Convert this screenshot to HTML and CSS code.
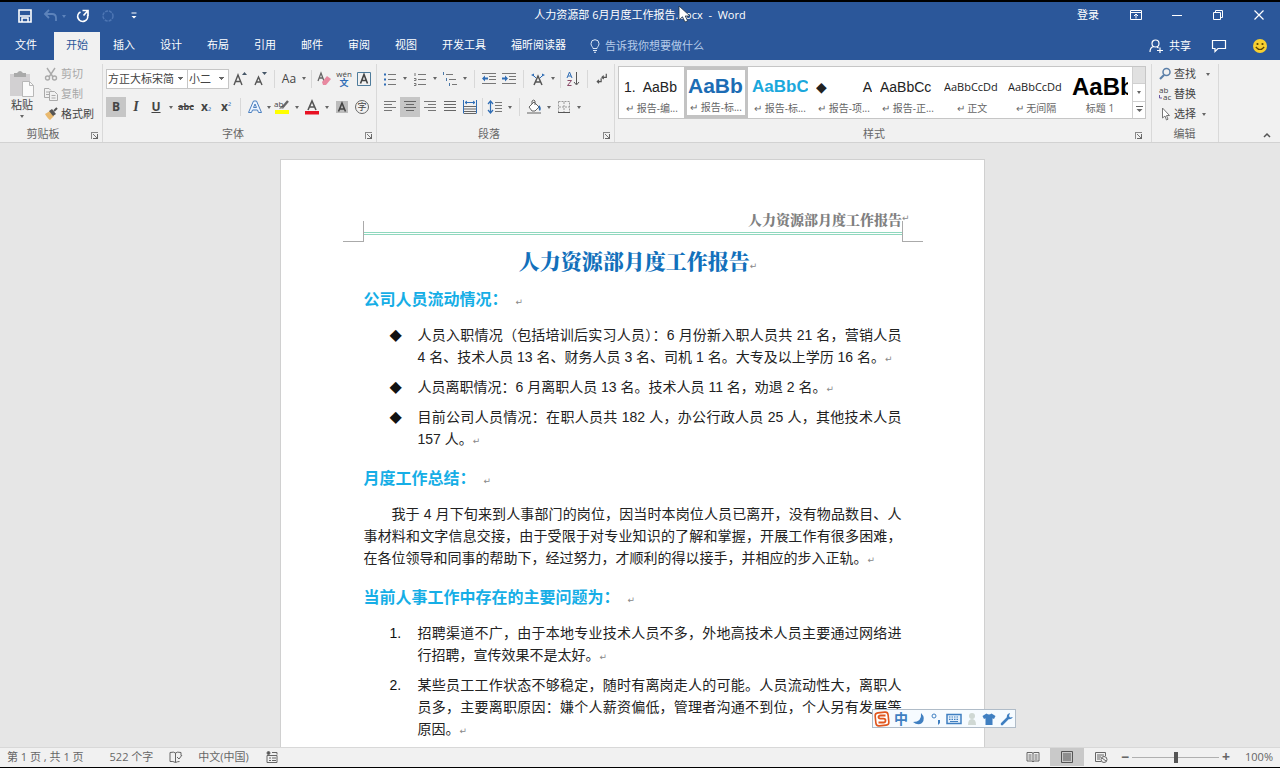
FILE: index.html
```html
<!DOCTYPE html>
<html lang="zh-CN">
<head>
<meta charset="utf-8">
<meta name="viewport" content="width=device-width, initial-scale=1">
<title>人力资源部 6月月度工作报告.docx - Word</title>
<link rel="stylesheet" href="styles.css">
</head>
<body>
<header class="titlebar">
  <div class="quick">
    <button aria-label="保存"><svg width="14" height="14" viewBox="0 0 14 14"><path d="M1 1h12v12H1z" fill="none" stroke="#fff" stroke-width="1.6"/><path d="M2 7h10M4 13v-4h6v4" fill="none" stroke="#fff" stroke-width="1.5"/></svg></button>
    <button class="faded" aria-label="撤消"><svg width="16" height="14" viewBox="0 0 16 14"><path d="M2 5h7q4 0 4 4v3M6 1L2 5l4 4" fill="none" stroke="#8fb0dd" stroke-width="1.8"/></svg><i class="caret"></i></button>
    <button aria-label="重复"><svg width="14" height="14" viewBox="0 0 14 14"><path d="M4.500 3A5 5 0 1 0 11.500 6M6.500 1.500H12V7M12 1.500L7.500 6.500" fill="none" stroke="#fff" stroke-width="1.700"/></svg></button>
    <button class="faded" aria-label="停止"><svg width="14" height="14" viewBox="0 0 14 14"><circle cx="7" cy="7" r="5" fill="none" stroke="#6f94cd" stroke-width="1.500" stroke-dasharray="3 1"/></svg></button>
    <button aria-label="自定义快速访问工具栏"><svg width="8" height="8" viewBox="0 0 8 8"><path d="M1.500 1h5" stroke="#fff"/><path d="M1.500 4h5L4 6.500z" fill="#fff"/></svg></button>
  </div>
  <div class="doc-name">人力资源部 6月月度工作报告.docx&nbsp; - &nbsp;Word</div>
  <div class="window-tools">
    <button class="login">登录</button>
    <button aria-label="功能区显示选项"><svg width="12" height="12" viewBox="0 0 12 12" fill="none" stroke="#fff"><path d="M.5 1.500h11v9H.5zM.5 3.500h11M6 9.500v-4M4 7l2-2 2 2"/></svg></button>
    <button aria-label="最小化"><svg width="12" height="12" viewBox="0 0 12 12"><path d="M1 6.500h10" stroke="#fff"/></svg></button>
    <button aria-label="还原"><svg width="12" height="12" viewBox="0 0 12 12" fill="none" stroke="#fff"><path d="M1.500 3.500h7v7h-7zM3.500 3.500v-2h7v7h-2"/></svg></button>
    <button aria-label="关闭"><svg width="12" height="12" viewBox="0 0 12 12"><path d="M1.500 1.500l9 9M10.500 1.500l-9 9" stroke="#fff" stroke-width="1.200"/></svg></button>
  </div>
  <svg class="pointer" width="14" height="18" viewBox="0 0 14 18"><path d="M1 1v14l3.500-3.200L7 17l2.600-1.200L7.200 11H12z" fill="#fff" stroke="#234" stroke-width=".8"/></svg>
</header>
<nav class="tabs">
  <a class="tab file" href="#">文件</a>
  <a class="tab active" href="#">开始</a>
  <a class="tab" href="#">插入</a>
  <a class="tab" href="#">设计</a>
  <a class="tab" href="#">布局</a>
  <a class="tab" href="#">引用</a>
  <a class="tab" href="#">邮件</a>
  <a class="tab" href="#">审阅</a>
  <a class="tab" href="#">视图</a>
  <a class="tab" href="#">开发工具</a>
  <a class="tab" href="#">福昕阅读器</a>
  <button class="tell"><svg width="10" height="14" viewBox="0 0 10 14" fill="none" stroke="#dce8f8"><path d="M3 9.500C3 8 1 7 1 4.700a4 4 0 0 1 8 0C9 7 7 8 7 9.500zM3 11.500h4M4 13.300h2"/></svg>告诉我你想要做什么</button>
  <div class="tab-tools">
    <button><svg width="14" height="14" viewBox="0 0 14 14" fill="none" stroke="#fff" stroke-width="1.200"><circle cx="6.500" cy="4.500" r="3.500"/><path d="M1 13q0-5 4-5.500M8 8l1.500 1M8 11.500h6M11 8.500v5.500"/></svg>共享</button>
    <button aria-label="批注"><svg width="16" height="14" viewBox="0 0 16 14" fill="none" stroke="#fff" stroke-width="1.200"><path d="M1.500 1.500h13v8H7l-3 3v-3H1.500z"/></svg></button>
    <button aria-label="反馈"><svg width="16" height="16" viewBox="0 0 16 16"><circle cx="8" cy="8" r="7" fill="#f8cf2f"/><circle cx="5.500" cy="6" r="1.100" fill="#5b4300"/><circle cx="10.500" cy="6" r="1.100" fill="#5b4300"/><path d="M3.800 9q4.200 5 8.400 0" fill="none" stroke="#5b4300" stroke-width="1.200"/></svg></button>
  </div>
</nav>

<section class="ribbon" aria-label="开始">
  <div class="group clipboard">
    <div class="clip-body">
      <button class="paste"><svg width="26" height="28" viewBox="0 0 26 28"><path d="M1 4h20v22H1z" fill="#d2d0d2"/><path d="M5 3h3q3-4 6 0h3v4H5z" fill="#aaa"/><path d="M13.500 11.500h7l4 4v11h-11z" fill="#fafafa" stroke="#b8b8b8"/><path d="M20.500 11.500v4h4" fill="none" stroke="#b8b8b8"/></svg>粘贴<i class="caret"></i></button>
      <div class="stack">
        <button class="dim"><svg width="14" height="14" viewBox="0 0 14 14" fill="none" stroke="#aaa" stroke-width="1.400"><path d="M3 1l6 9M11 1L5 10"/><circle cx="3.500" cy="11" r="2"/><circle cx="10.500" cy="11" r="2"/></svg>剪切</button>
        <button class="dim"><svg width="14" height="14" viewBox="0 0 14 14" fill="none" stroke="#aaa"><path d="M5 10.500H.5v-9H5l2 2M2 5h3M2 7.500h3M5.500 4.500h5l3 3v6h-8zM7.500 8.500h4M7.500 11h4"/></svg>复制</button>
        <button><svg width="14" height="14" viewBox="0 0 14 14"><path d="M1 7l5-3 4 5-4 4q-2-1-5-6z" fill="#e9b96e"/><path d="M5 4l3-2 4 5-3 2z" fill="#555"/><path d="M10 4l3-3" stroke="#555" stroke-width="2"/></svg>格式刷</button>
      </div>
    </div>
    <div class="caption">剪贴板<button class="launch" aria-label="剪贴板设置"></button></div>
  </div>

  <div class="group font">
    <div class="row">
      <select class="face" aria-label="字体"><option>方正大标宋简</option></select>
      <select class="size" aria-label="字号"><option>小二</option></select>
      <button class="tool" aria-label="增大字号"><svg width="16" height="16" viewBox="0 0 16 16"><path d="M2 14L6 4l4 10M3.500 10.500h5" fill="none" stroke="#555" stroke-width="1.400"/><path d="M10 4h5l-2.500-3z" fill="#456"/></svg></button>
      <button class="tool" aria-label="减小字号"><svg width="16" height="16" viewBox="0 0 16 16"><path d="M3 14l3.500-8L10 14M4.500 11h4" fill="none" stroke="#555" stroke-width="1.400"/><path d="M10 1h5l-2.500 3z" fill="#456"/></svg></button>
      <span class="sep"></span>
      <button class="tool case">Aa</button><i class="caret"></i>
      <span class="sep narrow"></span>
      <button class="tool" aria-label="清除格式"><svg width="16" height="16" viewBox="0 0 16 16"><path d="M2 10l3-8 3 8M3 7h4" fill="none" stroke="#666" stroke-width="1.300"/><path d="M6 11l5-6 4 3-5 6H7z" fill="#e889a0"/></svg></button>
      <button class="tool pinyin" aria-label="拼音指南"><span>wén</span><b>文</b></button>
      <button class="tool" aria-label="字符边框"><svg width="16" height="16" viewBox="0 0 16 16" fill="none"><path d="M1.500 1.500h13v13h-13z" stroke="#4f7c9c"/><path d="M4.500 12.500l3.500-9 3.500 9M6 9.500h4" stroke="#444" stroke-width="1.600"/></svg></button>
    </div>
    <div class="row">
      <button class="tool pressed"><b>B</b></button>
      <button class="tool serif"><em>I</em></button>
      <button class="tool"><u><b>U</b></u></button><i class="caret"></i>
      <button class="tool abc"><s>abc</s></button>
      <button class="tool sub"><b>x</b><small>₂</small></button>
      <button class="tool sub"><b>x</b><small>²</small></button>
      <span class="sep"></span>
      <button class="tool" aria-label="文本效果"><svg width="16" height="16" viewBox="0 0 16 16"><path d="M1.500 13.500L6.500 2h3l5 11.500h-3L10.500 11h-5l-1 2.500zM6.500 8.500h3L8 5z" fill="#eef5ff" stroke="#4b80c0"/></svg></button><i class="caret tight"></i>
      <button class="tool" aria-label="突出显示"><svg width="16" height="16" viewBox="0 0 16 16"><path d="M1 11h14v4H1z" fill="#ff0"/><path d="M8 9l6-7" stroke="#666" stroke-width="2.400"/><path d="M5 10l2-3 3 2z" fill="#888"/><text x="0" y="8" font-size="8" fill="#444">ab</text></svg></button><i class="caret"></i>
      <button class="tool" aria-label="字体颜色"><svg width="16" height="16" viewBox="0 0 16 16"><path d="M1 12h14v3.500H1z" fill="#e81123"/><path d="M4 11l4-9 4 9M5.500 8h5" fill="none" stroke="#555" stroke-width="1.600"/></svg></button><i class="caret"></i>
      <button class="tool" aria-label="字符底纹"><svg width="14" height="14" viewBox="0 0 14 14"><path d="M1 1h12v12H1z" fill="#bcbcbc"/><path d="M3.500 11.500L7 3l3.500 8.500M5 9h4" fill="none" stroke="#444" stroke-width="1.600"/></svg></button>
      <button class="tool"><span class="ring">字</span></button>
    </div>
    <div class="caption">字体<button class="launch" aria-label="字体设置"></button></div>
  </div>

  <div class="group para">
    <div class="row">
      <button class="tool" aria-label="项目符号"><svg width="14" height="14" viewBox="0 0 14 14"><path d="M5 2.500h8M5 7.500h8M5 12.500h8" stroke="#777"/><path d="M1 1.500h2v2H1zM1 6.500h2v2H1zM1 11.500h2v2H1z" fill="#2f6db5"/></svg></button><i class="caret"></i>
      <button class="tool" aria-label="编号"><svg width="14" height="14" viewBox="0 0 14 14"><path d="M5 2.500h8M5 7.500h8M5 12.500h8" stroke="#777"/><path d="M2 1v3M1 6.500h2v2H1M1 11.500h2v2H1" fill="none" stroke="#777"/></svg></button><i class="caret"></i>
      <button class="tool" aria-label="多级列表"><svg width="16" height="14" viewBox="0 0 16 14"><path d="M4 2.500h7M7 7.500h7M10 12.500h5" stroke="#777"/><path d="M1.500 0v3M4.500 6v3M7.500 11v3" stroke="#4a78a8"/></svg></button><i class="caret"></i>
      <span class="sep"></span>
      <button class="tool" aria-label="减少缩进"><svg width="16" height="14" viewBox="0 0 16 14"><path d="M1 1.500h14M8 4.500h7M8 7.500h7M1 11.500h14" stroke="#777"/><path d="M1 6.500l3-3v2h3v2H4v2z" fill="#2f6db5"/></svg></button>
      <button class="tool" aria-label="增加缩进"><svg width="16" height="14" viewBox="0 0 16 14"><path d="M1 1.500h14M8 4.500h7M8 7.500h7M1 11.500h14" stroke="#777"/><path d="M7 6.500l-3-3v2H1v2h3v2z" fill="#2f6db5"/></svg></button>
      <span class="sep"></span>
      <button class="tool" aria-label="中文版式"><svg width="16" height="16" viewBox="0 0 16 16" fill="none"><path d="M4 14l4-9 4 9M5.500 11h5" stroke="#555" stroke-width="1.500"/><path d="M1 4l3-1.500v3zM15 4l-3-1.500v3z" fill="#2f6db5"/><path d="M3 4l3 3M13 4l-3 3" stroke="#2f6db5"/></svg></button><i class="caret"></i>
      <span class="sep narrow"></span>
      <button class="tool" aria-label="排序"><svg width="14" height="16" viewBox="0 0 14 16" fill="none"><path d="M1 7l2.500-6L6 7M2 5h3" stroke="#2f6db5"/><path d="M1.500 9.500h4l-4 5h4" stroke="#8a4a68"/><path d="M10.500 1v12M8 11l2.500 3 2.500-3" stroke="#555"/></svg></button>
      <span class="sep"></span>
      <button class="tool" aria-label="显示编辑标记"><svg width="12" height="12" viewBox="0 0 14 14" fill="none" stroke="#555" stroke-width="1.400"><path d="M12 1v4H7M9 3L7 5l2 2M6 6v4H1M3.500 8l-2 2 2 2"/></svg></button>
    </div>
    <div class="row">
      <button class="tool" aria-label="左对齐"><svg width="14" height="14" viewBox="0 0 14 14"><path d="M1 1.500h12M1 4.500h8M1 7.500h12M1 10.500h8" stroke="#777"/></svg></button>
      <button class="tool pressed" aria-label="居中"><svg width="14" height="14" viewBox="0 0 14 14"><path d="M1 1.500h12M3 4.500h8M1 7.500h12M3 10.500h8" stroke="#666"/></svg></button>
      <button class="tool" aria-label="右对齐"><svg width="14" height="14" viewBox="0 0 14 14"><path d="M1 1.500h12M5 4.500h8M1 7.500h12M5 10.500h8" stroke="#777"/></svg></button>
      <button class="tool" aria-label="两端对齐"><svg width="14" height="14" viewBox="0 0 14 14"><path d="M1 1.500h12M1 4.500h12M1 7.500h12M1 10.500h12" stroke="#666"/></svg></button>
      <button class="tool" aria-label="分散对齐"><svg width="16" height="14" viewBox="0 0 16 14" fill="none"><path d="M1.500 0v13.500M14.500 0v13.500" stroke="#2f6db5"/><path d="M3 2.500h10M5 1L3 2.500 5 4M11 1l2 1.500L11 4" stroke="#2f6db5"/><path d="M2 6.500h12M2 9h12M2 11.500h12M2 13.500h12" stroke="#666"/></svg></button>
      <span class="sep narrow"></span>
      <button class="tool" aria-label="行距"><svg width="16" height="14" viewBox="0 0 16 14" fill="none"><path d="M3.500 1v12M1 4l2.500-3L6 4M1 10l2.500 3L6 10" stroke="#2f6db5" stroke-width="1.200"/><path d="M8 2.500h7M8 5.500h7M8 8.500h7M8 11.500h7" stroke="#777"/></svg></button><i class="caret"></i>
      <span class="sep"></span>
      <button class="tool" aria-label="底纹"><svg width="16" height="16" viewBox="0 0 16 16"><path d="M3 8l5-5 5 5-4 4H6z" fill="#fff" stroke="#666"/><path d="M6 5V2q2-2 3 0v4" fill="none" stroke="#666"/><path d="M13 6q3 3 1 6-2-1-1-6" fill="#2f6db5"/><path d="M1 14h14" stroke="#aaa" stroke-width="2"/></svg></button><i class="caret"></i>
      <button class="tool" aria-label="边框"><svg width="14" height="14" viewBox="0 0 14 14" fill="none"><path d="M1.500 1.500h11v11M1.500 1.500v11M7 2v10M2 7h10" stroke="#999" stroke-dasharray="2 1"/><path d="M1 12.500h12" stroke="#555"/></svg></button><i class="caret"></i>
    </div>
    <div class="caption">段落<button class="launch" aria-label="段落设置"></button></div>
  </div>

  <div class="group styles">
    <div class="gallery">
      <button class="style"><span class="sample s14">1.&nbsp; AaBb</span><span class="name">↵ 报告-编...</span></button>
      <button class="style chosen"><span class="sample s21">AaBb</span><span class="name">↵ 报告-标...</span></button>
      <button class="style"><span class="sample s18">AaBbC</span><span class="name">↵ 报告-标...</span></button>
      <button class="style"><span class="sample s14 split"><span>◆</span><span>A</span></span><span class="name">↵ 报告-项...</span></button>
      <button class="style"><span class="sample s14">AaBbCc</span><span class="name">↵ 报告-正...</span></button>
      <button class="style"><span class="sample s12">AaBbCcDd</span><span class="name">↵ 正文</span></button>
      <button class="style"><span class="sample s12">AaBbCcDd</span><span class="name">↵ 无间隔</span></button>
      <button class="style"><span class="sample s24">AaBb</span><span class="name">标题 1</span></button>
      <div class="scroller"><button aria-label="上一行" disabled></button><button aria-label="下一行"><i class="caret"></i></button><button aria-label="其他"><svg width="7" height="7" viewBox="0 0 7 7"><path d="M0 .5h7" stroke="#666"/><path d="M.5 3h6l-3 3z" fill="#666"/></svg></button></div>
    </div>
    <div class="caption">样式<button class="launch" aria-label="样式设置"></button></div>
  </div>

  <div class="group edit">
    <div class="stack">
      <button><svg width="12" height="14" viewBox="0 0 12 14" fill="none" stroke="#5b7fa8"><circle cx="7.500" cy="5" r="3.500" stroke-width="1.500"/><path d="M5 8l-4 4" stroke-width="2.200"/></svg>查找<i class="caret far"></i></button>
      <button><svg width="12" height="14" viewBox="0 0 12 14"><text x="0" y="6" font-size="8" fill="#444">ab</text><text x="4" y="13" font-size="8" fill="#444">ac</text><path d="M.5 8v3H3" fill="none" stroke="#6a55a0"/></svg>替换</button>
      <button><svg width="12" height="14" viewBox="0 0 12 14"><path d="M3.500 1v10L6 9l1.500 4L9 12.200 7.500 8.500h3z" fill="#fff" stroke="#777"/></svg>选择<i class="caret"></i></button>
    </div>
    <div class="caption">编辑</div>
  </div>
  <button class="collapse" aria-label="折叠功能区"><svg width="8" height="6" viewBox="0 0 8 6"><path d="M1 5l3-3 3 3" fill="none" stroke="#555" stroke-width="1.500"/></svg></button>
</section>

<main class="workspace">
  <article class="page">
    <div class="page-head"><span>人力资源部月度工作报告</span><i class="ret">↵</i></div>
    <div class="rule"></div>
    <h1>人力资源部月度工作报告<i class="ret">↵</i></h1>
    <h2>公司人员流动情况：<i class="ret">↵</i></h2>
    <ul>
      <li><span class="mark">◆</span><div><span class="line full">人员入职情况（包括培训后实习人员）：6 月份新入职人员共 21 名，营销人员</span><span class="line">4 名、技术人员 13 名、财务人员 3 名、司机 1 名。大专及以上学历 16 名。<i class="ret">↵</i></span></div></li>
      <li><span class="mark">◆</span><div><span class="line">人员离职情况：6 月离职人员 13 名。技术人员 11 名，劝退 2 名。<i class="ret">↵</i></span></div></li>
      <li><span class="mark">◆</span><div><span class="line full">目前公司人员情况：在职人员共 182 人，办公行政人员 25 人，其他技术人员</span><span class="line">157 人。<i class="ret">↵</i></span></div></li>
    </ul>
    <h2>月度工作总结：<i class="ret">↵</i></h2>
    <p><span class="line full indent">我于 4 月下旬来到人事部门的岗位，因当时本岗位人员已离开，没有物品数目、人</span><span class="line full">事材料和文字信息交接，由于受限于对专业知识的了解和掌握，开展工作有很多困难，</span><span class="line">在各位领导和同事的帮助下，经过努力，才顺利的得以接手，并相应的步入正轨。<i class="ret">↵</i></span></p>
    <h2>当前人事工作中存在的主要问题为：<i class="ret">↵</i></h2>
    <ol>
      <li><span class="mark">1.</span><div><span class="line full">招聘渠道不广，由于本地专业技术人员不多，外地高技术人员主要通过网络进</span><span class="line">行招聘，宣传效果不是太好。<i class="ret">↵</i></span></div></li>
      <li><span class="mark">2.</span><div><span class="line full">某些员工工作状态不够稳定，随时有离岗走人的可能。人员流动性大，离职人</span><span class="line full">员多，主要离职原因：嫌个人薪资偏低，管理者沟通不到位，个人另有发展等</span><span class="line">原因。<i class="ret">↵</i></span></div></li>
    </ol>
  </article>
</main>

<aside class="ime" aria-label="输入法">
  <svg width="16" height="16" viewBox="0 0 16 16"><rect x="1.500" y="1.500" width="13" height="13" rx="3" fill="#fff" stroke="#e0561f" stroke-width="1.600" transform="rotate(-6 8 8)"/><path d="M11.500 4.500H6.500Q4.500 4.500 4.500 6T6.500 7.700h3q2 0 2 1.900t-2 1.900H4.500" fill="none" stroke="#e0561f" stroke-width="1.800"/></svg>
  <span class="zh">中</span>
  <svg width="14" height="14" viewBox="0 0 14 14"><path d="M9 1q5 5 1 10-4 3-9-1 9 0 8-9z" fill="#3f7fc1"/></svg>
  <svg width="12" height="14" viewBox="0 0 12 14"><circle cx="4" cy="4" r="2" fill="none" stroke="#3f7fc1"/><path d="M8 8h2v3l-2 2z" fill="#3f7fc1"/></svg>
  <svg width="16" height="12" viewBox="0 0 16 12"><path d="M1 1.500h14v9H1z" fill="#e4f0fb" stroke="#3f7fc1" stroke-width="1.500"/><path d="M3 4h10M3 6.300h10" stroke="#3f7fc1" stroke-width="1.200" stroke-dasharray="1.500 1"/><path d="M4 8.500h8" stroke="#3f7fc1"/></svg>
  <svg width="12" height="14" viewBox="0 0 12 14" fill="#cfd8d4"><circle cx="6" cy="4" r="3"/><path d="M2 13q0-6 4-6t4 6z"/></svg>
  <svg width="14" height="14" viewBox="0 0 14 14"><path d="M4.500 1.500q2.500 2 5 0L13.500 4l-1.500 3-1.500-.8V13h-7V6.200L2 7 .5 4z" fill="#3f7fc1"/></svg>
  <svg width="14" height="14" viewBox="0 0 14 14"><path d="M2 12l6-6" stroke="#3f7fc1" stroke-width="2.600" stroke-linecap="round"/><path d="M10 1q-4 1-3 5 3 3 6-1l-3 .5-1-1.500z" fill="#3f7fc1"/></svg>
</aside>

<footer class="status">
  <span class="pages">第 1 页 , 共 1 页</span>
  <span class="words">522 个字</span>
  <svg width="14" height="12" viewBox="0 0 14 12" fill="none" stroke="#666"><path d="M6.500 2v9.500Q4 10 1 10.500v-9Q5 .5 6.500 2 8 .5 12 1.500v3M6.500 11.500q2-1 4-1M8 6l2 2 3-4"/></svg>
  <span class="lang">中文(中国)</span>
  <svg width="12" height="12" viewBox="0 0 12 12" fill="none" stroke="#666"><path d="M1 4.500h10v7H1zM3 7h2M6 7h4M3 9.500h2M6 9.500h4"/><circle cx="2.500" cy="2" r="1.500" fill="#555"/><path d="M6 1.500h5v2"/></svg>
  <div class="views">
    <button aria-label="阅读视图"><svg width="14" height="12" viewBox="0 0 14 12" fill="none" stroke="#666"><path d="M7 2v9M1 1.500h5l1 .8 1-.8h5v8.500H8l-1 1-1-1H1zM2.500 4h3M2.500 6h3M2.500 8h3M8.500 4h3M8.500 6h3M8.500 8h3"/></svg></button>
    <button class="on" aria-label="页面视图"><svg width="14" height="12" viewBox="0 0 14 12" fill="none" stroke="#555"><path d="M1.500.5h11v11h-11zM3 3h8M3 5h8M3 7h8M3 9h8"/></svg></button>
    <button aria-label="Web 版式视图"><svg width="14" height="12" viewBox="0 0 14 12" fill="none" stroke="#666"><path d="M7 10.500H1.500v-9h10V5M3 4h7M3 6h4M3 8h3"/><circle cx="10" cy="8.500" r="3"/><path d="M8 7l4 3"/></svg></button>
  </div>
  <button class="zoom-step" aria-label="缩小">−</button>
  <input type="range" min="0" max="100" value="50" aria-label="显示比例">
  <button class="zoom-step" aria-label="放大">+</button>
  <span class="percent">100%</span>
</footer>
</body>
</html>
```
FILE: styles.css
```css
* { box-sizing: border-box; }
body {
  margin: 0;
  height: 100vh;
  display: flex;
  flex-direction: column;
  position: relative;
  overflow: hidden;
  border-top: 2px solid #000;
  border-bottom: 1px solid #000;
  background: #e6e6e6;
  color: #444;
  font: 11px/16px "Open Sans", "Noto Sans CJK SC", sans-serif;
}
button {
  margin: 0; padding: 0; border: 0;
  background: none; color: inherit; font: inherit;
  display: flex; align-items: center; justify-content: center;
}
svg { display: block; flex: none; overflow: visible; }
a { color: inherit; text-decoration: none; }

.caret {
  width: 10px; flex: none;
  display: flex; justify-content: center;
}
.caret.tight { width: 7px; }
.caret::before {
  content: "";
  border: 2px solid transparent;
  border-top: 3px solid #666;
  border-bottom: 0;
}

/* Title bar */
.titlebar {
  position: relative;
  flex: none;
  display: grid;
  grid-template-columns: 1fr auto 1fr;
  align-items: center;
  height: 30px;
  background: #2b579a;
  color: #fff;
}
.quick { display: flex; align-items: center; gap: 11px; padding: 0 0 2px 18px; }
.quick .faded { opacity: .5; }
.quick .faded:nth-child(2) { margin-right: -4px; }
.quick .caret::before { border-top-color: #8fb0dd; }
.quick button:last-child { margin-left: 4px; }
.doc-name { white-space: nowrap; padding-bottom: 4px; }
.window-tools { display: flex; justify-content: flex-end; align-items: center; padding: 0 15px 4px 0; gap: 29px; }
.login { margin-right: 2px; }
.pointer { position: absolute; left: 53%; top: 3px; }

/* Tabs */
.tabs {
  flex: none;
  display: flex;
  gap: 1px;
  height: 28px;
  background: #2b579a;
  color: #fff;
}
.tab { padding: 5px 12px; }
.tab.file { padding: 5px 16px 5px 15px; }
.tab.active { background: #f1f1f1; color: #2b579a; }
.tell { gap: 5px; margin-left: 11px; color: #b5cbe9; }
.tab-tools { display: flex; gap: 20px; margin-left: auto; padding-right: 12px; }
.tab-tools button { gap: 6px; }
.tab-tools button:last-child { margin-left: 5px; }

/* Ribbon */
.ribbon {
  position: relative;
  flex: none;
  display: flex;
  height: 83px;
  padding: 4px 61px 0 0;
  background: #f1f1f1;
  border-bottom: 1px solid #d2d2d2;
}
.group {
  flex: none;
  display: flex;
  flex-direction: column;
  border-right: 1px solid #d9d9d9;
  white-space: nowrap;
}
.caption {
  position: relative;
  margin-top: auto;
  padding-right: 16px;
  text-align: center;
  color: #666;
}
.launch {
  position: absolute;
  right: 4px; bottom: 3px;
  width: 7px; height: 7px;
  border-left: 1px solid #888;
  border-top: 1px solid #888;
}
.launch::after {
  content: "";
  width: 4px; height: 4px;
  border-right: 1px solid #666;
  border-bottom: 1px solid #666;
  background: linear-gradient(45deg, transparent 40%, #777 40% 60%, transparent 60%);
}
.clipboard { width: 103px; }
.clip-body { display: flex; }
.paste { flex-direction: column; width: 44px; line-height: 14px; }
.paste .caret { margin-top: 3px; }
.stack { display: flex; flex-direction: column; align-items: flex-start; }
.stack button { height: 20px; gap: 3px; }
.dim { color: #a8a8a8; }

.font { width: 274px; padding-left: 3px; }
.para { width: 238px; padding-left: 3px; }
.row { display: flex; align-items: center; height: 28px; }
.row:first-child { height: 29px; }
.tool { width: 20px; height: 20px; font-size: 12px; flex: none; }
.tool.pressed { background: #c6c6c6; }
.tool.serif { font-family: "Liberation Serif", serif; font-size: 14px; font-weight: 700; }
.tool.abc { font-size: 9px; font-weight: 700; }
.tool.sub small { font-size: 9px; color: #2f6db5; }
.tool.pinyin { flex-direction: column; font-size: 8px; line-height: 8px; }
.tool.pinyin b { color: #2f6db5; font-size: 9px; line-height: 10px; }
.ring {
  width: 14px; height: 14px;
  border: 1px solid #666; border-radius: 50%;
  font-size: 9px; line-height: 12px;
}
.sep { width: 9px; height: 18px; flex: none; background: linear-gradient(#d8d8d8, #d8d8d8) center / 1px 100% no-repeat; }
.sep.narrow { width: 5px; }
select {
  appearance: none;
  flex: none;
  height: 20px;
  margin: 0;
  padding: 0 1px;
  border: 1px solid #c6c6c6;
  border-radius: 0;
  color: #444;
  font: inherit;
  background: #fff conic-gradient(from -45deg at 50% 100%, #666 0 90deg, transparent 0) right 4px center / 5px 3px no-repeat;
}
.face { width: 82px; }
.size { width: 41px; border-left: 0; margin-right: 1px; }

.styles { flex: 1; min-width: 0; padding: 2px 5px 0 3px; }
.gallery {
  display: flex;
  height: 53px;
  border: 1px solid #c6c6c6;
  background: #fff;
  padding-left: 1px;
}
.style {
  flex: 1 1 64px;
  min-width: 0;
  display: block;
  padding: 3px 1px 0;
  border: 3px solid transparent;
  border-width: 1px 3px;
}
.style.chosen { border: 3px solid #c3c3c3; padding-top: 1px; }
.sample {
  display: block;
  height: 28px;
  overflow: hidden;
  color: #222;
  font-family: "Liberation Sans", "DejaVu Sans", sans-serif;
  line-height: 28px;
  text-align: left;
}
.name { display: block; text-align: center; color: #666; line-height: 14px; font-size: 10px; }
.split { display: flex; justify-content: space-between; }
.s12 { font-size: 11px; font-family: "Open Sans", sans-serif; }
.s14 { font-size: 14px; }
.s18 { font-size: 17px; font-weight: 700; color: #1ba8dc; }
.s21 { font-size: 21px; font-weight: 700; color: #1c6cb4; }
.s24 { font-size: 24px; font-weight: 700; color: #000; }
.scroller {
  width: 13px; flex: none;
  display: flex; flex-direction: column;
  border-left: 1px solid #d0d0d0;
}
.scroller button { flex: 1; border-top: 1px solid #d0d0d0; }
.scroller button:disabled { background: #e1e1e1; border-top: 0; }
.edit { width: 67px; padding-left: 7px; }
.edit .caption { padding-right: 8px; }
.stack .caret.far { margin-left: 4px; }
.collapse { position: absolute; right: 9px; bottom: 4px; }

/* Document */
.workspace {
  flex: 1;
  min-height: 0;
  display: flex;
  justify-content: center;
  padding: 16px 16px 0 0;
  overflow: hidden;
}
.page {
  width: 100%;
  max-width: 705px;
  padding: 49px 82px 0 83px;
  background: #fff;
  border: 1px solid #d0d0d0;
  border-bottom: 0;
  color: #222;
  font: 14px/22px "Liberation Sans", "Noto Sans CJK SC", sans-serif;
}
.page-head {
  display: flex;
  justify-content: flex-end;
  align-items: center;
  height: 23px;
  padding-bottom: 4px;
  margin-right: -8px;
  color: #808080;
  font-family: "Noto Serif CJK SC", "Noto Sans CJK SC", serif;
  font-weight: 900;
}
.rule {
  position: relative;
  height: 3px;
  border-top: 1px solid #8fd8be;
  border-bottom: 1px solid #8fd8be;
}
.rule::before, .rule::after {
  content: "";
  position: absolute;
  top: -12px;
  width: 20px; height: 20px;
  border-bottom: 1px solid #aaa;
}
.rule::before { right: 100%; border-right: 1px solid #aaa; }
.rule::after { left: 100%; border-left: 1px solid #aaa; }
h1 {
  margin: 10px 0 13px;
  padding-left: 11px;
  text-align: center;
  font-family: "Noto Serif CJK SC", "Noto Sans CJK SC", serif;
  font-size: 21px;
  font-weight: 900;
  line-height: 30px;
  color: #1270bb;
}
h2 {
  margin: 17px 0 12px;
  font-size: 16px;
  line-height: 24px;
  color: #16aee6;
}
h1 + h2 { margin-top: 13px; }
h2 .ret { margin-left: 8px; }
.ret { font: 9px/9px "DejaVu Sans", sans-serif; color: #888; }
p, ul, ol { margin: 0; padding: 0; }
ul, ol { list-style: none; display: flex; flex-direction: column; gap: 8px; padding-left: 26px; }
li { display: flex; }
.mark { width: 28px; flex: none; color: #111; }
ul .mark { font: 16px/22px "DejaVu Sans", sans-serif; }
li div { flex: 1; min-width: 0; }
.line { display: block; }
.full { text-align: justify; text-align-last: justify; }
.indent { padding-left: 28px; }

/* Input method bar */
.ime {
  position: absolute;
  right: 264px; bottom: 39px;
  display: flex;
  align-items: center;
  gap: 4px;
  height: 19px;
  padding: 0 1px;
  border: 1px solid #b0bcc8;
  background: #f6fbff;
}
.zh { color: #3f7fc1; font-size: 14px; font-weight: 700; }

/* Status bar */
.status {
  flex: none;
  display: flex;
  align-items: center;
  height: 20px;
  padding: 0 7px 1px;
  background: #f1f1f1;
  border-top: 1px solid #d8d8d8;
  color: #666;
  white-space: nowrap;
}
.words { margin: 0 16px 0 26px; }
.lang { margin: 0 17px 0 15px; }
.views { display: flex; align-self: stretch; margin-left: auto; }
.views button { width: 34px; }
.views .on { background: #c9c9c9; }
.zoom-step { width: 14px; font-size: 14px; font-weight: 700; }
input[type="range"] {
  appearance: none;
  width: 87px; height: 16px;
  margin: 0;
  background: linear-gradient(#b0b0b0, #b0b0b0) center / 100% 1px no-repeat;
}
input[type="range"]::-webkit-slider-thumb {
  appearance: none;
  width: 4px; height: 11px;
  background: #555;
}
.percent { margin-left: 12px; }
```
